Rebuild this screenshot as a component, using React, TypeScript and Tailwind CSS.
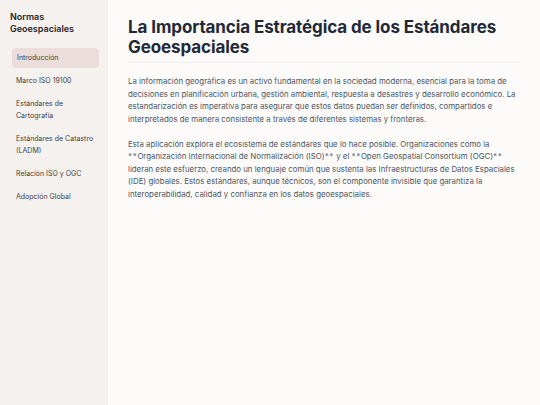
import React from "react";

const items = [
  "Introducción",
  "Marco ISO 19100",
  "Estándares de Cartografía",
  "Estándares de Catastro (LADM)",
  "Relación ISO y OGC",
  "Adopción Global",
];

function Star() {
  return <span className="tracking-[0.6px] font-medium text-[#6b7280]">**</span>;
}

export default function App() {
  return (
    <div
      className="flex w-[540px] h-[405px] overflow-hidden bg-[#fcfbfa]"
      style={{ fontFamily: "Inter, 'Noto Sans', sans-serif" }}
    >
      <aside className="w-[108px] shrink-0 bg-[#f4f1ee] pl-[12px] pr-[9px] pt-[11px]">
        <div className="-ml-[2px] text-[9px] leading-[12px] font-semibold text-[#292524]">
          Normas
          <br />
          Geoespaciales
        </div>
        <nav className="mt-[13px] flex flex-col gap-[3px]">
          {items.map((t, i) => (
            <div
              key={t}
              className={
                "rounded-[4px] px-[4px] py-[4px] text-[7px] leading-[12px] " +
                (i === 0 ? "bg-[#ebdeda] text-[#44403c] pl-[5px]" : "text-[#44403c]")
              }
            >
              {t}
            </div>
          ))}
        </nav>
      </aside>
      <main className="flex-1 px-[20px] pt-[17px]">
        <h1 className="text-[17px] leading-[20px] font-bold text-[#1f2937] tracking-[-0.1px] pb-[5px] border-b border-[#f1eeeb]">
          La Importancia Estratégica de los Estándares Geoespaciales
        </h1>
        <div className="mt-[12px] text-[7.85px] leading-[12.5px] text-[#4b5563]">
          <p>
            La información geográfica es un activo fundamental en la sociedad moderna, esencial para la toma de
            decisiones en planificación urbana, gestión ambiental, respuesta a desastres y desarrollo económico. La
            estandarización es imperativa para asegurar que estos datos puedan ser definidos, compartidos e
            interpretados de manera consistente a través de diferentes sistemas y fronteras.
          </p>
          <p className="mt-[12.5px]">
            Esta aplicación explora el ecosistema de estándares que lo hace posible. Organizaciones como la{" "}
            <Star />Organización Internacional de Normalización (ISO)<Star /> y el <Star />Open Geospatial
            Consortium (OGC)<Star /> lideran este esfuerzo, creando un lenguaje común que sustenta las
            Infraestructuras de Datos Espaciales (IDE) globales. Estos estándares, aunque técnicos, son el
            componente invisible que garantiza la interoperabilidad, calidad y confianza en los datos
            geoespaciales.
          </p>
        </div>
      </main>
    </div>
  );
}
